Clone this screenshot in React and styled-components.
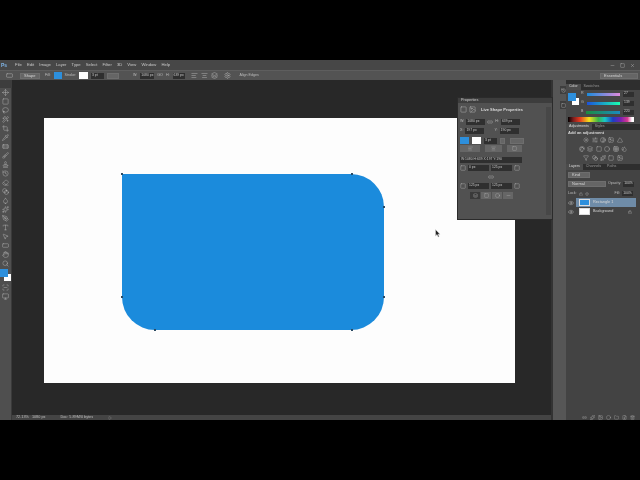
import React from 'react';
import styled, { createGlobalStyle } from 'styled-components';
import {
  Move, Square, Lasso, Wand2, Crop, Pipette, Bandage, Brush, Stamp, History, Eraser, Blend, Droplet,
  Sparkles, PenTool, Type, MousePointer2, RectangleHorizontal, Hand, Search, ScanLine, Monitor,
  Eye, Lock, Link2, Minus, X, Circle, SlidersHorizontal, Sun, Contrast, Palette, Layers, Grid3x3,
  Triangle, Image, Folder, FilePlus, Trash2, Filter, Droplets, AlignLeft, AlignCenter, Settings, Play,
} from 'lucide-react';

const GlobalStyle = createGlobalStyle`
  html, body { margin: 0; padding: 0; background: #000; }
  body { width: 640px; height: 480px; overflow: hidden; font-family: "Liberation Sans", Arial, sans-serif; }
`;

const Screen = styled.div`
  width: 640px;
  height: 480px;
  background: #000;
  display: flex;
  flex-direction: column;
  position: relative;
  overflow: hidden;
  filter: blur(0.35px);
`;

const Letterbox = styled.div`
  flex: 0 0 60px;
  background: #000;
`;

const Photoshop = styled.div`
  flex: 0 0 360px;
  display: flex;
  flex-direction: column;
  position: relative;
  background: #282828;
  color: #c8c8c8;
  font-size: 4.2px;
  line-height: 1;
  white-space: nowrap;
`;

const MenuBar = styled.div`
  flex: 0 0 10px;
  display: flex;
  align-items: center;
  gap: 5.1px;
  background: #474747;
  padding-right: 5px;
`;

const PsLogo = styled.span`
  width: 10px;
  box-sizing: border-box;
  color: #7fb4e6;
  font-weight: bold;
  font-size: 5px;
  padding-left: 1px;
`;

const WindowButtons = styled.div`
  margin-left: auto;
  display: flex;
  gap: 5px;
  color: #ddd;
`;

const OptionsBar = styled.div`
  flex: 0 0 10px;
  display: flex;
  align-items: center;
  background: #535353;
  border-top: 1px solid #5e5e5e;
  box-sizing: border-box;
  gap: 3px;
  padding: 0 2px 0 6px;
`;

const Gap = styled.span`
  flex: none;
  margin-left: ${({ $ml }) => $ml}px;
  display: inline-flex;
`;

const Dropdown = styled.div`
  width: ${({ $w }) => $w}px;
  height: ${({ $h }) => $h || 6}px;
  box-sizing: border-box;
  background: #656565;
  border: 1px solid #6e6e6e;
  color: #d4d4d4;
  display: flex;
  align-items: center;
  padding-left: 3px;
  font-size: 4px;
  flex: none;
  margin-left: ${({ $ml }) => $ml || 0}px;
`;

const WorkspaceSwitcher = styled(Dropdown)`
  margin-left: auto;
`;

const Field = styled.div`
  width: ${({ $w }) => $w}px;
  height: ${({ $h }) => $h || 6}px;
  box-sizing: border-box;
  background: #2f2f2f;
  color: #c8c8c8;
  display: flex;
  align-items: center;
  padding-left: 1px;
  font-size: 3.4px;
  flex: none;
`;

const Swatch = styled.div`
  width: ${({ $w }) => $w}px;
  height: ${({ $h }) => $h || 7}px;
  background: ${({ $c }) => $c};
  box-sizing: border-box;
  flex: none;
`;

const Label = styled.span`
  font-size: 3.6px;
  color: #bdbdbd;
  flex: none;
  margin-left: ${({ $ml }) => $ml || 0}px;
`;

const TabBar = styled.div`
  flex: 0 0 8px;
  display: flex;
  background: #3d3d3d;
  padding-left: 14px;
`;

const DocTab = styled.div`
  width: 82px;
  background: #4e4e4e;
  color: #d2d2d2;
  font-size: 3.9px;
  display: flex;
  align-items: center;
  justify-content: space-between;
  padding: 0 2px;
  box-sizing: border-box;
`;

/* the right dock starts level with the tab bar, so the body pulls up over it */
const Body = styled.div`
  flex: 1;
  display: flex;
  min-height: 0;
  margin-top: -8px;
`;

const ToolPanel = styled.div`
  flex: 0 0 12px;
  min-width: 0;
  width: 12px;
  background: #4f4f4f;
  border-right: 1px solid #3a3a3a;
  box-sizing: border-box;
  display: flex;
  flex-direction: column;
  align-items: center;
  gap: 2px;
  margin-top: 8px;
  padding-top: 1px;
  color: #c4c4c4;
  z-index: 1;
`;

const ColorChips = styled.div`
  position: relative;
  width: 11px;
  height: 13px;
  flex: none;
`;

const ForeChip = styled.div`
  position: absolute;
  left: 0;
  top: 0;
  width: 8px;
  height: 8px;
  background: #2d8fdc;
  z-index: 1;
`;

const BackChip = styled.div`
  position: absolute;
  left: 4px;
  top: 5px;
  width: 7px;
  height: 7px;
  background: #fff;
`;

const Center = styled.div`
  flex: 1;
  display: flex;
  flex-direction: column;
  min-width: 0;
`;

const Workspace = styled.div`
  flex: 1;
  padding: 38px 0 0 32px;
  box-sizing: border-box;
  background: #282828;
  display: flex;
  min-height: 0;
`;

const Canvas = styled.div`
  width: 471px;
  height: 265px;
  background: #fdfdfd;
  padding: 56px 0 0 78px;
  box-sizing: border-box;
  flex: none;
`;

const LiveShape = styled.div`
  position: relative;
  width: 262px;
  height: 156px;
  background: #1b8bdc;
  border-radius: 0 33px 33px 33px;
`;

const Anchor = styled.i`
  position: absolute;
  left: ${({ $x }) => $x - 1}px;
  top: ${({ $y }) => $y - 1}px;
  width: 2px;
  height: 2px;
  background: #2b4a63;
`;

const StatusBar = styled.div`
  flex: 0 0 5px;
  display: flex;
  align-items: center;
  background: #444;
  color: #bdbdbd;
  font-size: 3.8px;
  padding-left: 4px;
`;

const StatusItem = styled.span`
  margin-left: ${({ $ml }) => $ml}px;
  display: inline-flex;
`;

const Dock = styled.div`
  flex: 0 0 15px;
  background: #565656;
  border-left: 2px solid #333;
  box-sizing: border-box;
  padding-top: 6px;
  display: flex;
  flex-direction: column;
  align-items: flex-end;
  gap: 7px;
  color: #ddd;
  z-index: 1;
`;

const DockSlot = styled.div`
  width: 6px;
  height: 8px;
  background: #3e3e3e;
  display: flex;
  align-items: center;
  justify-content: center;
`;

const RightColumn = styled.div`
  flex: 0 0 74px;
  background: #2e2e2e;
  padding-top: 4px;
  box-sizing: border-box;
  display: flex;
  flex-direction: column;
  z-index: 1;
`;

const PanelTabs = styled.div`
  flex: 0 0 6px;
  display: flex;
  background: #2e2e2e;
  font-size: 3.6px;
  color: #9c9c9c;
`;

const PanelTab = styled.div`
  padding: 0 3px;
  display: flex;
  align-items: center;
  background: ${({ $on }) => ($on ? '#4b4b4b' : 'transparent')};
  color: ${({ $on }) => ($on ? '#ddd' : '#9c9c9c')};
`;

const ColorPanel = styled.div`
  flex: 0 0 34px;
  background: #474747;
  padding: 1px 6px 0 2px;
  display: flex;
  flex-direction: column;
  box-sizing: border-box;
`;

const ColorTop = styled.div`
  display: flex;
  gap: 2px;
  height: 26px;
`;

const ColorChipStack = styled.div`
  position: relative;
  width: 11px;
  height: 12px;
  margin-top: 2px;
  flex: none;
`;

const Sliders = styled.div`
  flex: 1;
  display: flex;
  flex-direction: column;
  gap: 3px;
`;

const SliderRow = styled.div`
  display: flex;
  align-items: center;
  gap: 3px;
  height: 6px;
`;

const SliderBar = styled.div`
  flex: 1;
  height: 3px;
  background: linear-gradient(90deg, ${({ $from }) => $from}, ${({ $to }) => $to});
`;

const Spectrum = styled.div`
  height: 5px;
  background: linear-gradient(90deg, #000 0, #7a1d1d 8%, #e53a1e 18%, #f2e21c 32%, #39b54a 46%, #19c7c7 56%, #1a3fc4 68%, #7a1fb0 80%, #d8388f 90%, #fff 97%);
`;

const AdjustPanel = styled.div`
  flex: 0 0 34px;
  background: #474747;
  padding: 1px 2px 0;
  box-sizing: border-box;
  color: #cfcfcf;
`;

const AdjustTitle = styled.div`
  font-size: 4px;
  font-weight: bold;
  color: #d8d8d8;
  margin-bottom: 0.5px;
`;

const IconRow = styled.div`
  display: flex;
  justify-content: center;
  gap: 2.4px;
  height: 9px;
  align-items: center;
`;

const LayersPanel = styled.div`
  flex: 1;
  background: #434343;
  display: flex;
  flex-direction: column;
  padding: 1px 2px 0;
  box-sizing: border-box;
  min-height: 0;
`;

const LayerControlRow = styled.div`
  display: flex;
  align-items: center;
  gap: 2px;
  height: ${({ $h }) => $h}px;
  flex: none;
  color: #bbb;
`;

const LayerRow = styled.div`
  display: flex;
  align-items: center;
  height: 9px;
  flex: none;
  color: #d6d6d6;
  font-size: 3.8px;
  gap: 2px;
  padding-right: 2px;
`;

const LayerBody = styled.div`
  flex: 1;
  align-self: stretch;
  display: flex;
  align-items: center;
  gap: 3px;
  background: ${({ $on }) => ($on ? '#6f8ca8' : 'transparent')};
  padding-left: 3px;
`;

const Thumb = styled.div`
  width: 11px;
  height: 7px;
  background: ${({ $c }) => $c};
  border: 1px solid #ddd;
  box-sizing: border-box;
  flex: none;
`;

const LayerFoot = styled.div`
  margin-top: auto;
  height: 6px;
  display: flex;
  align-items: center;
  justify-content: flex-end;
  gap: 3px;
  padding-right: 3px;
  color: #c8c8c8;
  flex: none;
`;

const PropertiesFloat = styled.div`
  position: absolute;
  left: 457px;
  top: 37px;
  width: 96px;
  height: 123px;
  background: #515151;
  border: 1px solid #2b2b2b;
  box-sizing: border-box;
  z-index: 2;
  display: flex;
  flex-direction: column;
  color: #c8c8c8;
`;

const PropHead = styled.div`
  flex: 0 0 5px;
  background: #3d3d3d;
  color: #d0d0d0;
  font-size: 3.8px;
  display: flex;
  align-items: center;
  padding-left: 3px;
`;

const PropMain = styled.div`
  flex: 1;
  display: flex;
  min-height: 0;
`;

const PropBody = styled.div`
  flex: 1;
  display: flex;
  flex-direction: column;
  align-items: flex-start;
  padding: 3px 0 0 2px;
`;

const PropScroll = styled.div`
  flex: 0 0 5px;
  margin: 4px 1px 4px 0;
  background: #474747;
`;

const PropRow = styled.div`
  display: flex;
  align-items: center;
  gap: ${({ $gap }) => $gap ?? 2}px;
  height: 7px;
  flex: none;
  margin-top: ${({ $mt }) => $mt || 0}px;
  margin-left: ${({ $ml }) => $ml || 0}px;
`;

const PropTitle = styled.span`
  font-size: 4px;
  font-weight: bold;
  color: #d8d8d8;
  margin-left: 3px;
`;

const IconButton = styled.div`
  width: ${({ $w }) => $w || 10}px;
  height: 7px;
  background: ${({ $on }) => ($on ? '#3a3a3a' : '#666')};
  display: flex;
  align-items: center;
  justify-content: center;
  flex: none;
`;

const Pointer = styled.svg`
  position: absolute;
  left: 435px;
  top: 169px;
  z-index: 3;
`;

const menus = ['File', 'Edit', 'Image', 'Layer', 'Type', 'Select', 'Filter', '3D', 'View', 'Window', 'Help'];
const toolsTop = [Move, Square, Lasso, Wand2, Crop, Pipette, Bandage, Brush, Stamp, History, Eraser, Blend, Droplet, Sparkles, PenTool, Type, MousePointer2, RectangleHorizontal, Hand, Search];
const adjustRows = [
  [Sun, SlidersHorizontal, Contrast, Image, Triangle],
  [Palette, Layers, Square, Circle, Grid3x3, Droplets],
  [Filter, Blend, Sparkles, Square, Image],
];
const anchors = [[0, 0], [230, 0], [262, 33], [262, 123], [230, 156], [33, 156], [0, 123]];

const Tiny = ({ icon: Icon, size = 8, width = 1.4 }) => <Icon size={size} strokeWidth={width} />;

export default function App() {
  return (
    <Screen>
      <GlobalStyle />
      <Letterbox />
      <Photoshop>
        <MenuBar>
          <PsLogo>Ps</PsLogo>
          {menus.map((m) => <span key={m}>{m}</span>)}
          <WindowButtons>
            <Tiny icon={Minus} size={5} />
            <Tiny icon={Square} size={5} />
            <Tiny icon={X} size={5} />
          </WindowButtons>
        </MenuBar>

        <OptionsBar>
          <Tiny icon={RectangleHorizontal} size={7} />
          <Dropdown $w={20} $ml={4}>Shape</Dropdown>
          <Label $ml={2}>Fill:</Label>
          <Swatch $w={8} $c="#2d8fdc" />
          <Label>Stroke:</Label>
          <Swatch $w={9} $c="#fff" />
          <Field $w={13}>3 pt</Field>
          <Dropdown $w={12} />
          <Label $ml={11}>W:</Label>
          <Field $w={14}>1080 px</Field>
          <Label>GO</Label>
          <Label>H:</Label>
          <Field $w={12}>639 px</Field>
          <Gap $ml={3}><Tiny icon={AlignLeft} size={7} /></Gap>
          <Tiny icon={AlignCenter} size={7} />
          <Tiny icon={Layers} size={7} />
          <Gap $ml={3}><Tiny icon={Settings} size={7} /></Gap>
          <Label $ml={6}>Align Edges</Label>
          <WorkspaceSwitcher $w={38}>Essentials</WorkspaceSwitcher>
        </OptionsBar>

        <TabBar>
          <DocTab>
            <span>Untitled-1 @ 72.1% (Rectangle 1, RGB/8) *</span>
            <Tiny icon={X} size={3} />
          </DocTab>
        </TabBar>

        <Body>
          <ToolPanel>
            {toolsTop.map((Icon, i) => <Tiny key={i} icon={Icon} size={7} />)}
            <ColorChips>
              <ForeChip />
              <BackChip />
            </ColorChips>
            <Tiny icon={ScanLine} size={7} />
            <Tiny icon={Monitor} size={7} />
          </ToolPanel>

          <Center>
            <Workspace>
              <Canvas>
                <LiveShape>
                  {anchors.map(([x, y]) => <Anchor key={`${x}-${y}`} $x={x} $y={y} />)}
                </LiveShape>
              </Canvas>
            </Workspace>
            <StatusBar>
              <span>72.13%</span>
              <StatusItem $ml={3}>1080 px</StatusItem>
              <StatusItem $ml={15}>Doc: 5.89M/0 bytes</StatusItem>
              <StatusItem $ml={15}><Tiny icon={Play} size={4} /></StatusItem>
            </StatusBar>
          </Center>

          <Dock>
            <DockSlot><Tiny icon={History} size={5} /></DockSlot>
            <DockSlot><Tiny icon={Square} size={5} /></DockSlot>
          </Dock>

          <RightColumn>
            <PanelTabs>
              <PanelTab $on>Color</PanelTab>
              <PanelTab>Swatches</PanelTab>
            </PanelTabs>
            <ColorPanel>
              <ColorTop>
                <ColorChipStack>
                  <ForeChip />
                  <BackChip />
                </ColorChipStack>
                <Sliders>
                  <SliderRow><Label>R</Label><SliderBar $from="#1b8bdc" $to="#e08bdc" /><Field $w={11} $h={5}>27</Field></SliderRow>
                  <SliderRow><Label>G</Label><SliderBar $from="#1b50dc" $to="#1bffb0" /><Field $w={11} $h={5}>139</Field></SliderRow>
                  <SliderRow><Label>B</Label><SliderBar $from="#1b8b40" $to="#1b8bc0" /><Field $w={11} $h={5}>220</Field></SliderRow>
                </Sliders>
              </ColorTop>
              <Spectrum />
            </ColorPanel>

            <PanelTabs>
              <PanelTab $on>Adjustments</PanelTab>
              <PanelTab>Styles</PanelTab>
            </PanelTabs>
            <AdjustPanel>
              <AdjustTitle>Add an adjustment</AdjustTitle>
              {adjustRows.map((row, i) => (
                <IconRow key={i}>
                  {row.map((Icon, j) => <Tiny key={j} icon={Icon} size={6} />)}
                </IconRow>
              ))}
            </AdjustPanel>

            <PanelTabs>
              <PanelTab $on>Layers</PanelTab>
              <PanelTab>Channels</PanelTab>
              <PanelTab>Paths</PanelTab>
            </PanelTabs>
            <LayersPanel>
              <LayerControlRow $h={8}>
                <Dropdown $w={22} $h={6}>Kind</Dropdown>
              </LayerControlRow>
              <LayerControlRow $h={10}>
                <Dropdown $w={38} $h={6}>Normal</Dropdown>
                <Label>Opacity:</Label>
                <Field $w={11} $h={5}>100%</Field>
              </LayerControlRow>
              <LayerControlRow $h={9}>
                <Label>Lock:</Label>
                <Tiny icon={Lock} size={4} />
                <Tiny icon={Move} size={4} />
                <Label $ml={24}>Fill:</Label>
                <Field $w={11} $h={5}>100%</Field>
              </LayerControlRow>
              <LayerRow>
                <Tiny icon={Eye} size={6} />
                <LayerBody $on>
                  <Thumb $c="#2d8fdc" />
                  <span>Rectangle 1</span>
                </LayerBody>
              </LayerRow>
              <LayerRow>
                <Tiny icon={Eye} size={6} />
                <LayerBody>
                  <Thumb $c="#fff" />
                  <span>Background</span>
                  <Gap $ml={12}><Tiny icon={Lock} size={4} /></Gap>
                </LayerBody>
              </LayerRow>
              <LayerFoot>
                <Tiny icon={Link2} size={5} />
                <Tiny icon={Sparkles} size={5} />
                <Tiny icon={Image} size={5} />
                <Tiny icon={Circle} size={5} />
                <Tiny icon={Folder} size={5} />
                <Tiny icon={FilePlus} size={5} />
                <Tiny icon={Trash2} size={5} />
              </LayerFoot>
            </LayersPanel>
          </RightColumn>
        </Body>

        <PropertiesFloat>
          <PropHead>Properties</PropHead>
          <PropMain>
            <PropBody>
              <PropRow>
                <Tiny icon={Square} size={7} />
                <Tiny icon={Image} size={7} />
                <PropTitle>Live Shape Properties</PropTitle>
              </PropRow>
              <PropRow $mt={5}>
                <Label>W:</Label>
                <Field $w={19}>1080 px</Field>
                <Tiny icon={Link2} size={6} />
                <Label>H:</Label>
                <Field $w={19}>639 px</Field>
              </PropRow>
              <PropRow $mt={2}>
                <Label>X:</Label>
                <Field $w={19}>197 px</Field>
                <Label $ml={8}>Y:</Label>
                <Field $w={19}>190 px</Field>
              </PropRow>
              <PropRow $mt={3} $gap={3}>
                <Swatch $w={9} $c="#2d8fdc" />
                <Swatch $w={9} $c="#fff" />
                <Field $w={13}>3 pt</Field>
                <Dropdown $w={4} />
                <Dropdown $w={14} $ml={2} />
              </PropRow>
              <PropRow $mt={1} $gap={5}>
                <IconButton $w={20}><Tiny icon={AlignLeft} size={5} /></IconButton>
                <IconButton $w={17}><Tiny icon={AlignCenter} size={5} /></IconButton>
                <IconButton $w={15}><Tiny icon={Square} size={5} /></IconButton>
              </PropRow>
              <PropRow $mt={4}>
                <Field $w={62} $h={6}>W:1080 H:639 X:197 Y:190</Field>
              </PropRow>
              <PropRow $mt={1}>
                <Tiny icon={Square} size={6} />
                <Field $w={21}>0 px</Field>
                <Field $w={21}>125 px</Field>
                <Tiny icon={Square} size={6} />
              </PropRow>
              <PropRow $mt={2} $ml={28}>
                <Tiny icon={Link2} size={6} />
              </PropRow>
              <PropRow $mt={2}>
                <Tiny icon={Square} size={6} />
                <Field $w={21}>125 px</Field>
                <Field $w={21}>125 px</Field>
                <Tiny icon={Square} size={6} />
              </PropRow>
              <PropRow $mt={3} $gap={1} $ml={10}>
                <IconButton $on><Tiny icon={Layers} size={5} /></IconButton>
                <IconButton><Tiny icon={Square} size={5} /></IconButton>
                <IconButton><Tiny icon={Circle} size={5} /></IconButton>
                <IconButton><Tiny icon={Minus} size={5} /></IconButton>
              </PropRow>
            </PropBody>
            <PropScroll />
          </PropMain>
        </PropertiesFloat>

        <Pointer width="6" height="9" viewBox="0 0 6 9">
          <path d="M0.5 0.5 L0.5 7 L2 5.6 L3.2 8 L4.2 7.5 L3 5.2 L5 5.2 Z" fill="#222" stroke="#ddd" strokeWidth="0.5" />
        </Pointer>
      </Photoshop>
      <Letterbox />
    </Screen>
  );
}
